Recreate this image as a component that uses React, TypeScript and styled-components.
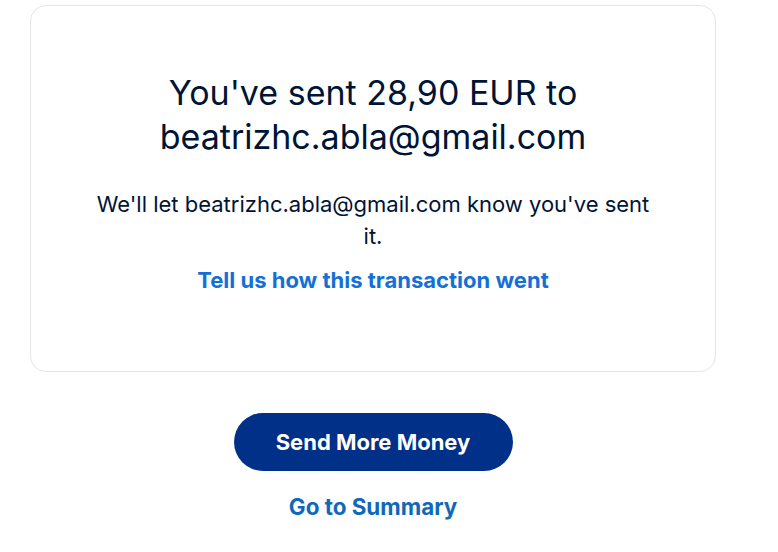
import styled, { createGlobalStyle } from 'styled-components';

const GlobalStyle = createGlobalStyle`
  body {
    margin: 0;
    background: #fff;
    font-family: Inter, "Liberation Sans", sans-serif;
  }
`;

const StyledPage = styled.main`
  display: flex;
  flex-direction: column;
  align-items: center;
  padding: 5px 0 0 30px;
  width: 686px;
`;

const StyledCard = styled.section`
  align-items: center;
  border: 1px solid #e6e6e6;
  border-radius: 16px;
  box-sizing: border-box;
  display: flex;
  flex-direction: column;
  height: 367px;
  padding: 65px 48px 0;
  width: 100%;
`;

const StyledHeading = styled.h1`
  color: #001435;
  font-size: 34px;
  font-weight: 400;
  line-height: 44px;
  margin: 0;
  text-align: center;
  max-width: 460px;
`;

const StyledMessage = styled.p`
  color: #001435;
  font-size: 22px;
  line-height: 32px;
  margin: 29px 0 0;
  max-width: 565px;
  text-align: center;
`;

const StyledLink = styled.a<{ $size?: number; $color?: string }>`
  color: ${({ $color }) => $color ?? '#1470d6'};
  cursor: pointer;
  font-size: ${({ $size }) => $size ?? 22}px;
  font-weight: 700;
  text-decoration: none;
`;

const StyledFeedback = styled.div`
  margin-top: 15px;
`;

const StyledButton = styled.button.attrs({
  type: 'button'
})`
  background: #003087;
  border: none;
  border-radius: 29px;
  color: #fff;
  cursor: pointer;
  font-family: inherit;
  font-size: 22px;
  font-weight: 700;
  height: 58px;
  margin-top: 41px;
  width: 279px;
`;

const StyledSummary = styled.div`
  margin-top: 22px;
`;

const App = (): JSX.Element => (
  <>
    <GlobalStyle />
    <StyledPage>
      <StyledCard>
        <StyledHeading>You've sent 28,90 EUR to beatrizhc.abla@gmail.com</StyledHeading>
        <StyledMessage>
          We'll let beatrizhc.abla@gmail.com know you've sent it.
        </StyledMessage>
        <StyledFeedback>
          <StyledLink>Tell us how this transaction went</StyledLink>
        </StyledFeedback>
      </StyledCard>
      <StyledButton>Send More Money</StyledButton>
      <StyledSummary>
        <StyledLink $size={22.4} $color="#0f68b8">Go to Summary</StyledLink>
      </StyledSummary>
    </StyledPage>
  </>
);

export default App;
